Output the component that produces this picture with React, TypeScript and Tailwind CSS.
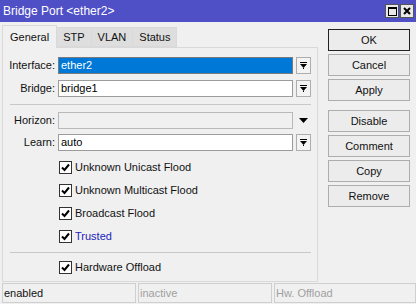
import React from 'react';

const font = { fontFamily: '"Segoe UI", "Liberation Sans", Arial, sans-serif' };

const DropArrow = ({ bar = true }: { bar?: boolean }) => (
  <svg width="9" height="8" viewBox="0 0 9 8">
    {bar && <rect x="1" y="0" width="7" height="1" fill="#000" />}
    <polygon points={bar ? '1,2 8,2 4.5,6' : '0,1 9,1 4.5,6'} fill="#000" />
    {bar && <rect x="4" y="6" width="1" height="1" fill="#000" />}
  </svg>
);

const ComboRow = ({ label, value, selected = false }: { label: string; value: string; selected?: boolean }) => (
  <div className="flex items-center h-[17px]">
    <div className="w-[55px] text-right pr-[3px] text-[11px] text-[#111]">{label}</div>
    <div
      className={`w-[235px] h-[17px] border flex items-center pl-[2px] text-[11px] ${
        selected ? 'bg-[#0078d7] text-white border-[#7a7a7a]' : 'bg-white text-black border-[#9c9c9c]'
      }`}
    >
      {value}
    </div>
    <div className="ml-[3px] w-[15px] h-[17px] border border-[#adadad] bg-[#f3f3f3] flex items-center justify-center">
      <DropArrow />
    </div>
  </div>
);

const Check = ({ label, blue = false }: { label: string; blue?: boolean }) => (
  <div className="flex items-center h-[16px] pl-[56px]">
    <div className="w-[13px] h-[13px] border border-[#333] bg-white flex items-center justify-center">
      <svg width="9" height="9" viewBox="0 0 9 9">
        <path d="M1 4.5 L3.5 7 L8 1.5" stroke="#000" strokeWidth="2" fill="none" />
      </svg>
    </div>
    <span className={`ml-[3px] text-[11px] ${blue ? 'text-[#2222bb]' : 'text-[#111]'}`}>{label}</span>
  </div>
);

const Btn = ({ label, primary = false }: { label: string; primary?: boolean }) => (
  <div
    className={`w-[82px] h-[22px] flex items-center justify-center text-[11px] text-[#111] bg-[#ececec] border ${
      primary ? 'border-[#222]' : 'border-[#adadad]'
    }`}
  >
    {label}
  </div>
);

export default function App() {
  const tabs = ['General', 'STP', 'VLAN', 'Status'];
  return (
    <div className="w-[416px] h-[304px] bg-[#f0f0f0] overflow-hidden flex flex-col" style={font}>
      {/* title bar */}
      <div className="h-[22px] bg-[#4f4fc6] flex items-center justify-between pl-[3px] pr-[2px]">
        <span className="text-white text-[12px]">Bridge Port &lt;ether2&gt;</span>
        <div className="flex gap-[1px]">
          <div className="w-[14px] h-[14px] bg-[#e8e8e8] border border-[#555] flex items-center justify-center">
            <div className="w-[9px] h-[9px] border border-black border-t-2" />
          </div>
          <div className="w-[14px] h-[14px] bg-[#e8e8e8] border border-[#555] flex items-center justify-center">
            <svg width="8" height="8" viewBox="0 0 8 8">
              <path d="M1 1 L7 7 M7 1 L1 7" stroke="#000" strokeWidth="2" />
            </svg>
          </div>
        </div>
      </div>

      <div className="flex flex-1">
        {/* left: tabs + panel */}
        <div className="ml-[2px] w-[316px] flex flex-col pt-[2px]">
          <div className="flex items-end h-[23px]">
            {tabs.map((t, i) => (
              <div
                key={t}
                className={`text-[11px] text-[#111] flex items-center border border-[#d9d9d9] ${
                  i === 0
                    ? 'h-[23px] bg-[#f0f0f0] border-b-0 -mb-[1px] relative z-10 px-[7px]'
                    : 'h-[20px] bg-[#dedede] border-l-0 px-[6px]'
                }`}
              >
                {t}
              </div>
            ))}
          </div>
          <div className="h-[235px] border border-[#d9d9d9] flex flex-col pt-[9px]">
            <div className="flex flex-col gap-[6px]">
              <ComboRow label="Interface:" value="ether2" selected />
              <ComboRow label="Bridge:" value="bridge1" />
            </div>
            <div className="mt-[7px] mx-[7px] h-[1px] bg-[#c8c8c8] w-[301px]" />
            <div className="mt-[7px] flex flex-col gap-[5px]">
              <div className="flex items-center h-[17px]">
                <div className="w-[55px] text-right pr-[3px] text-[11px] text-[#111]">Horizon:</div>
                <div className="w-[235px] h-[17px] border border-[#b9b9b9] bg-[#f0f0f0]" />
                <div className="ml-[3px] w-[15px] h-[17px] flex items-center justify-center">
                  <DropArrow bar={false} />
                </div>
              </div>
              <ComboRow label="Learn:" value="auto" />
            </div>
            <div className="mt-[8px] flex flex-col gap-[7px]">
              <Check label="Unknown Unicast Flood" />
              <Check label="Unknown Multicast Flood" />
              <Check label="Broadcast Flood" />
              <Check label="Trusted" blue />
            </div>
            <div className="mt-[8px] mx-[7px] h-[1px] bg-[#c8c8c8] w-[301px]" />
            <div className="mt-[6px]">
              <Check label="Hardware Offload" />
            </div>
          </div>
        </div>

        {/* right: buttons */}
        <div className="ml-[10px] pt-[7px] flex flex-col gap-[3px]">
          <Btn label="OK" primary />
          <Btn label="Cancel" />
          <Btn label="Apply" />
          <div className="h-[3px]" />
          <Btn label="Disable" />
          <Btn label="Comment" />
          <Btn label="Copy" />
          <Btn label="Remove" />
        </div>
      </div>

      {/* status bar */}
      <div className="h-[20px] flex gap-[2px] pl-[2px] mb-[1px] text-[11px]">
        <div className="w-[134px] border border-[#cfcfcf] flex items-center pl-[1px] text-[#111]">enabled</div>
        <div className="w-[134px] border border-[#cfcfcf] flex items-center pl-[1px] text-[#a0a0a0]">inactive</div>
        <div className="flex-1 border border-[#cfcfcf] flex items-center pl-[1px] text-[#a0a0a0]">Hw. Offload</div>
      </div>
    </div>
  );
}
